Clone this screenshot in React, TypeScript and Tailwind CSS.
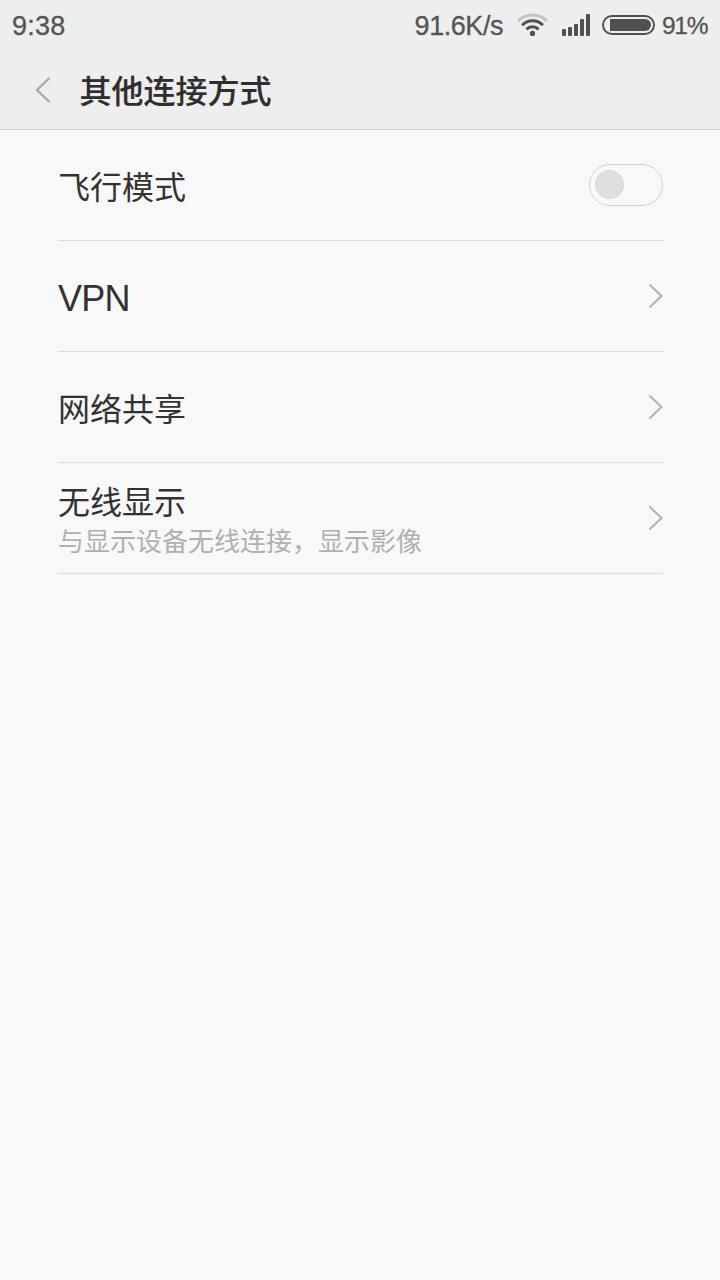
import React from 'react';

interface SettingItem {
  id: string;
  title: string;
  summary?: string;
  latin?: boolean;
  type: 'switch' | 'link';
}

const items: SettingItem[] = [
  { id: 'airplane', title: '飞行模式', type: 'switch' },
  { id: 'vpn', title: 'VPN', latin: true, type: 'link' },
  { id: 'tether', title: '网络共享', type: 'link' },
  { id: 'wfd', title: '无线显示', summary: '与显示设备无线连接，显示影像', type: 'link' }
];

function WifiIcon() {
  return (
    <svg width="32" height="26" viewBox="0 0 32 26" fill="none" strokeWidth="3">
      <path d="M1.1 9A20.5 20.5 0 0 1 29.9 9" stroke="#c3c3c3" />
      <path d="M5.1 13.2A14.6 14.6 0 0 1 25.9 13.2" stroke="#505050" />
      <path d="M9.4 17.4A8.6 8.6 0 0 1 21.6 17.4" stroke="#505050" />
      <circle cx="15.5" cy="21.4" r="2.6" fill="#505050" />
    </svg>
  );
}

function SignalIcon() {
  return (
    <svg width="28" height="22" viewBox="0 0 28 22" fill="#505050">
      <rect x="0" y="15" width="4" height="7" rx="1" />
      <rect x="6" y="13" width="4" height="9" rx="1" />
      <rect x="12" y="10" width="4" height="12" rx="1" />
      <rect x="18" y="5" width="4" height="17" rx="1" />
      <rect x="24" y="0" width="4" height="22" rx="1" />
    </svg>
  );
}

function BatteryIcon() {
  return (
    <svg width="53" height="20" viewBox="0 0 53 20" fill="none">
      <rect x="1" y="1" width="51" height="18" rx="9" stroke="#505050" strokeWidth="2" />
      <path d="M8 4H43A6 6 0 0 1 43 16H8Z" fill="#505050" />
    </svg>
  );
}

function Chevron() {
  return (
    <svg width="16" height="26" viewBox="0 0 16 26" fill="none" className="-mr-px">
      <path d="M1.5 1.5L13.5 13L1.5 24.5" stroke="#b2b2b2" strokeWidth="2" />
    </svg>
  );
}

function Switch() {
  return (
    <div className="w-[74px] h-[42px] -mt-px rounded-full border border-[#d2d2d2] flex items-center pl-[5px]">
      <div className="w-[29px] h-[29px] rounded-full bg-[#dfdfdf] border border-[#d6d6d6]" />
    </div>
  );
}

function StatusBar() {
  return (
    <div className="h-[50px] pl-3 flex items-center text-[27px] leading-[50px] text-[#555555] [-webkit-text-stroke:0.3px_#555555]">
      <span className="pt-px tracking-[0.2px]">9:38</span>
      <span className="ml-auto mr-3.5 pt-px tracking-[-0.45px]">91.6K/s</span>
      <WifiIcon />
      <div className="ml-[13px] mr-3">
        <SignalIcon />
      </div>
      <BatteryIcon />
      <span className="w-[65px] pl-[7px] pt-px text-[24.5px] tracking-[-1.3px]">91%</span>
    </div>
  );
}

export default function App() {
  return (
    <div className="w-[720px] h-[1280px] bg-[#f8f8f8] overflow-hidden font-['Liberation_Sans','Noto_Sans_CJK_SC',sans-serif]">
      <header className="h-[130px] bg-[#eeeeee] border-b border-[#d0d0d0]">
        <StatusBar />
        <div className="h-[80px] flex items-center">
          <svg width="17" height="28" viewBox="0 0 17 28" fill="none" className="ml-[34px]">
            <path d="M15.5 2L3 14L15.5 26" stroke="#a8a8a8" strokeWidth="2.2" />
          </svg>
          <h1 className="ml-[28.5px] pb-0.5 text-[32px] leading-none font-medium text-[#2e2e2e] [-webkit-text-stroke:0.2px_#2e2e2e] font-['Noto_Sans_CJK_SC',sans-serif]">
            其他连接方式
          </h1>
        </div>
      </header>

      <main className="pl-[58px] pr-[57px]">
        {items.map((item) => (
          <div key={item.id} className="h-[111px] border-b border-[#dcdcdc] flex items-center justify-between">
            <div className={item.summary ? 'pt-2 text-[#323232]' : 'pt-1.5 text-[#323232]'}>
              <div className={item.latin ? 'text-[36px] leading-[48px] tracking-[-0.7px]' : 'text-[32px] leading-[40px]'}>
                {item.title}
              </div>
              {item.summary && (
                <div className="text-[26px] leading-[38px] text-[#b0b0b0]">{item.summary}</div>
              )}
            </div>
            {item.type === 'switch' ? <Switch /> : <Chevron />}
          </div>
        ))}
      </main>
    </div>
  );
}
